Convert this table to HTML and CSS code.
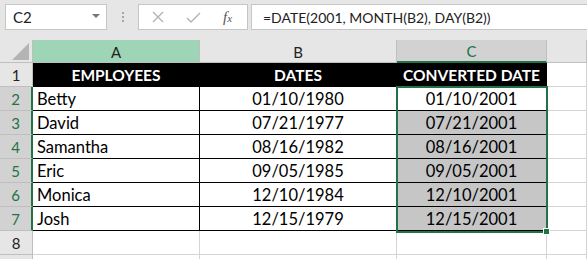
FILE: index.html
```html
<!DOCTYPE html>
<html>
<head>
<meta charset="utf-8">
<link rel="stylesheet" href="styles.css">
</head>
<body>
<div class="app">
  <div class="toolbar">
    <div class="namebox">
      <span class="ref">C2</span>
      <svg class="caret" width="8" height="4" viewBox="0 0 8 4"><path d="M0 0H8L4 4Z" fill="#777"/></svg>
    </div>
    <div class="grip">
      <span></span><span></span><span></span>
    </div>
    <div class="fxbtns">
      <svg class="icon" width="12" height="12" viewBox="0 0 12 12"><path d="M1 1L11 11M11 1L1 11" stroke="#b3b3b3" stroke-width="1.4" fill="none"/></svg>
      <svg class="icon" width="15" height="11" viewBox="0 0 15 11"><path d="M1 6L5 10L14 1" stroke="#b3b3b3" stroke-width="1.4" fill="none"/></svg>
      <span class="fx">f<sub>x</sub></span>
    </div>
    <div class="formula">=DATE(2001, MONTH(B2), DAY(B2))</div>
  </div>

  <div class="sheet">
    <div class="corner"><svg width="17" height="17" viewBox="0 0 17 17"><path d="M17 0V17H0Z" fill="#b4b4b4"/></svg></div>
    <div class="colhead hl-a">A</div>
    <div class="colhead">B</div>
    <div class="colhead sel-col">C</div>
    <div class="colhead"></div>

    <div class="rowhead">1</div>
    <div class="cell th">EMPLOYEES</div>
    <div class="cell th">DATES</div>
    <div class="cell th">CONVERTED DATE</div>
    <div class="cell out"></div>

    <div class="rowhead sel-row">2</div>
    <div class="cell td name">Betty</div>
    <div class="cell td">01/10/1980</div>
    <div class="cell td">01/10/2001</div>
    <div class="cell out"></div>

    <div class="rowhead sel-row">3</div>
    <div class="cell td name">David</div>
    <div class="cell td">07/21/1977</div>
    <div class="cell td shade">07/21/2001</div>
    <div class="cell out"></div>

    <div class="rowhead sel-row">4</div>
    <div class="cell td name">Samantha</div>
    <div class="cell td">08/16/1982</div>
    <div class="cell td shade">08/16/2001</div>
    <div class="cell out"></div>

    <div class="rowhead sel-row">5</div>
    <div class="cell td name">Eric</div>
    <div class="cell td">09/05/1985</div>
    <div class="cell td shade">09/05/2001</div>
    <div class="cell out"></div>

    <div class="rowhead sel-row">6</div>
    <div class="cell td name">Monica</div>
    <div class="cell td">12/10/1984</div>
    <div class="cell td shade">12/10/2001</div>
    <div class="cell out"></div>

    <div class="rowhead sel-row">7</div>
    <div class="cell td name">Josh</div>
    <div class="cell td">12/15/1979</div>
    <div class="cell td shade">12/15/2001</div>
    <div class="cell out"></div>

    <div class="rowhead">8</div>
    <div class="cell out"></div>
    <div class="cell out"></div>
    <div class="cell out"></div>
    <div class="cell out"></div>

    <div class="rowhead"></div>
    <div class="cell out"></div>
    <div class="cell out"></div>
    <div class="cell out"></div>
    <div class="cell out"></div>

    <div class="selection"></div>
    <div class="handle"></div>
  </div>
</div>
</body>
</html>
```

FILE: styles.css
```css
* { box-sizing: border-box; }
html, body { margin: 0; padding: 0; background: #fff; }
body { width: 587px; height: 259px; overflow: hidden; font-family: Lato, "Liberation Sans", sans-serif; }

.app { width: 587px; height: 259px; overflow: hidden; }

.toolbar {
  height: 40px;
  background: #e6e6e6;
  display: flex;
  align-items: flex-start;
  padding-top: 4px;
  padding-left: 5px;
}

.namebox {
  width: 102px;
  height: 26px;
  background: #fff;
  border: 1px solid #c6c6c6;
  display: flex;
  align-items: center;
  justify-content: space-between;
  padding: 0 6px 0 7px;
  font-size: 15px;
  color: #222;
}
.namebox .caret { margin-top: -2px; }

.grip {
  width: 31px;
  height: 26px;
  display: flex;
  flex-direction: column;
  align-items: center;
  justify-content: center;
  gap: 2px;
}
.grip span { width: 2px; height: 2px; background: #a6a6a6; }

.fxbtns {
  width: 110px;
  height: 26px;
  background: #fff;
  border: 1px solid #c6c6c6;
  display: flex;
  align-items: center;
  padding-left: 13px;
}
.fxbtns .icon:first-child { margin-right: 22px; }
.fxbtns .icon:nth-child(2) { margin-right: 22px; }
.fx {
  font-family: "Liberation Serif", serif;
  font-style: italic;
  font-size: 15px;
  color: #555;
  line-height: 1;
}
.fx sub { font-size: 11px; vertical-align: 0; }

.formula {
  margin-left: 3px;
  flex: 1;
  height: 26px;
  background: #fff;
  border: 1px solid #c6c6c6;
  border-right: none;
  display: flex;
  align-items: center;
  padding-left: 11px;
  font-size: 14px;
  color: #222;
}

.sheet {
  position: relative;
  display: grid;
  grid-template-columns: 33px 167px 197px 150px 1fr;
  grid-template-rows: 23px repeat(9, 24px);
}

.corner {
  background: #e6e6e6;
  border-right: 1px solid #bfbfbf;
  border-bottom: 1px solid #bfbfbf;
  display: flex;
  align-items: flex-end;
  justify-content: flex-end;
  padding: 0 3px 2px 0;
}

.colhead {
  background: #e6e6e6;
  border-right: 1px solid #bfbfbf;
  border-bottom: 1px solid #bfbfbf;
  display: flex;
  align-items: center;
  justify-content: center;
  font-size: 15px;
  color: #222;
  padding-top: 1px;
}
.colhead.hl-a { background: #9fd5b7; }
.colhead.sel-col {
  background: #d2d2d2;
  color: #217346;
  border-bottom: 2px solid #217346;
}

.rowhead {
  background: #e6e6e6;
  border-right: 1px solid #bfbfbf;
  border-bottom: 1px solid #bfbfbf;
  display: flex;
  align-items: center;
  justify-content: center;
  font-size: 15px;
  color: #222;
  padding-top: 1px;
}
.rowhead.sel-row {
  background: #d2d2d2;
  color: #217346;
  border-right: 2px solid #217346;
}

.cell {
  border-right: 1px solid #d4d4d4;
  border-bottom: 1px solid #d4d4d4;
  display: flex;
  align-items: flex-end;
  font-size: 16.5px;
  line-height: 1;
  padding-bottom: 3px;
}
.cell.th {
  background: #000;
  color: #fff;
  font-weight: bold;
  font-size: 15.5px;
  justify-content: center;
  border-color: #000;
}
.cell.td {
  background: #fff;
  color: #000;
  justify-content: center;
  border-color: #000;
}
.cell.td.name { justify-content: flex-start; padding-left: 4px; }
.cell.td.shade { background: #c6c6c6; }

.selection {
  position: absolute;
  left: 396px;
  top: 46px;
  width: 152px;
  height: 147px;
  border: 2px solid #217346;
  pointer-events: none;
}
.handle {
  position: absolute;
  left: 543px;
  top: 188px;
  width: 7px;
  height: 7px;
  background: #217346;
  border: 1px solid #fff;
}
```
